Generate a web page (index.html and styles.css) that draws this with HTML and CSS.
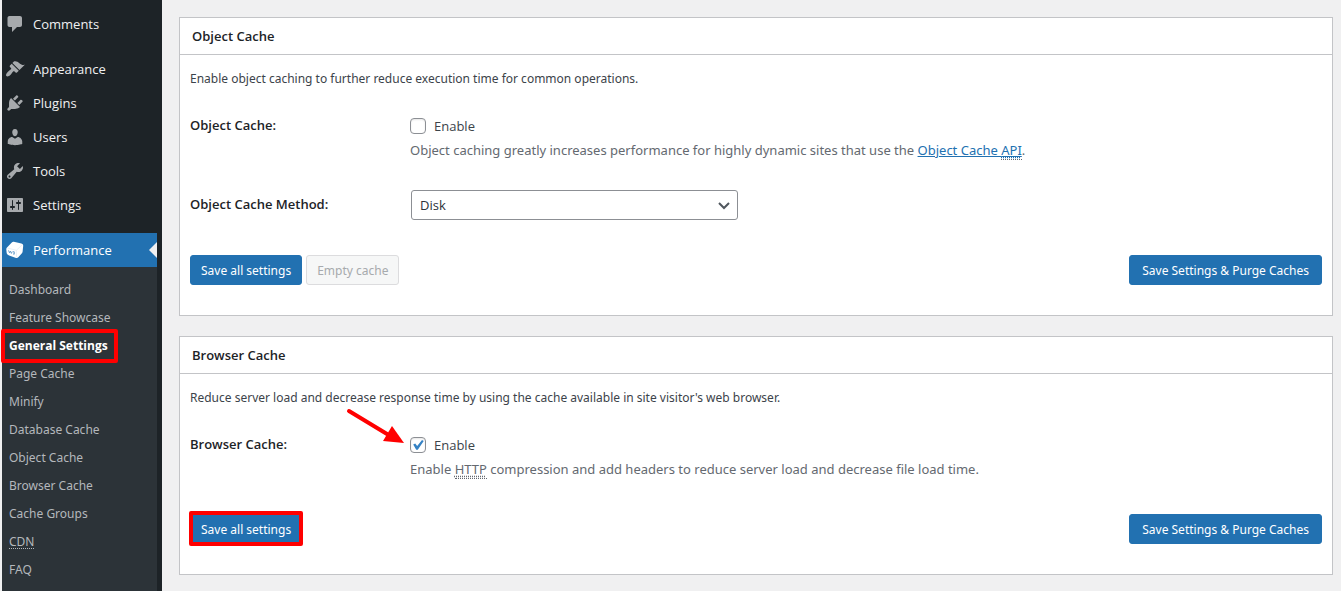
FILE: index.html
```html
<!DOCTYPE html>
<html lang="en">
<head>
<meta charset="utf-8">
<meta name="viewport" content="width=device-width, initial-scale=1">
<title>General Settings – Performance</title>
<link rel="stylesheet" href="styles.css">
</head>
<body>
<div class="admin">
  <nav class="sidebar" aria-label="Main menu">
    <ul class="menu">
      <li><a class="menu-link" href="#"><svg class="icon" viewBox="0 0 20 20"><path d="M4.500 2h10.500c1.100 0 2 .9 2 2v7c0 1.100-.9 2-2 2h-3l-5 5v-5H4.500c-1.100 0-2-.9-2-2V4c0-1.100.9-2 2-2z"/></svg>Comments</a></li>
      <li class="group-start"><a class="menu-link" href="#"><svg class="icon" viewBox="0 0 20 20"><path d="M14.48 11.06L7.41 3.99l1.5-1.5c.5-.56 2.3-.47 3.51.32 1.21.8 1.43 1.28 2.91 2.1 1.18.64 2.45 1.26 4.45.85zm-.71.71L6.7 4.7 4.93 6.47c-.39.39-.39 1.02 0 1.41l1.06 1.06c.39.39.39 1.03 0 1.42-.6.6-1.43 1.11-2.21 1.69-.35.26-.7.53-1.01.84C1.43 14.23.4 16.08 1.4 17.07c.99 1 2.84-.03 4.18-1.36.31-.31.58-.66.85-1.02.57-.78 1.08-1.61 1.69-2.21.39-.39 1.02-.39 1.41 0l1.06 1.06c.39.39 1.02.39 1.41 0z"/></svg>Appearance</a></li>
      <li><a class="menu-link" href="#"><svg class="icon" viewBox="0 0 20 20"><path d="M13.11 4.36L9.87 7.6 8 5.73l3.24-3.24c.35-.34 1.05-.2 1.56.32.52.51.66 1.21.31 1.55zm-8 1.77l.91-1.12 9.01 9.01-1.19.84c-.71.71-2.63 1.16-3.82 1.16H6.14L4.9 17.26c-.59.59-1.54.59-2.12 0-.59-.58-.59-1.53 0-2.12l1.24-1.24v-3.88c0-1.13.4-3.19 1.09-3.89zm7.26 3.97l3.24-3.24c.34-.35 1.04-.21 1.55.31.52.51.66 1.21.31 1.55l-3.24 3.25z"/></svg>Plugins</a></li>
      <li><a class="menu-link" href="#"><svg class="icon" viewBox="0 0 20 20"><path d="M10 9.25c-2.27 0-2.73-3.44-2.73-3.44C7 4.02 7.82 2 9.97 2c2.16 0 2.98 2.02 2.71 3.81 0 0-.41 3.44-2.68 3.44zm0 2.57L12.72 10c2.39 0 4.52 2.33 4.52 4.53v2.49s-3.65 1.13-7.24 1.13c-3.65 0-7.24-1.13-7.24-1.13v-2.49c0-2.25 1.94-4.48 4.47-4.48z"/></svg>Users</a></li>
      <li><a class="menu-link" href="#"><svg class="icon" viewBox="0 0 20 20"><path d="M16.68 9.77c-1.34 1.34-3.3 1.67-4.95.99l-5.41 6.52c-.99.99-2.59.99-3.58 0s-.99-2.59 0-3.57l6.52-5.42c-.68-1.65-.35-3.61.99-4.95 1.28-1.28 3.12-1.62 4.72-1.06l-2.89 2.89 2.82 2.82 2.86-2.87c.53 1.58.18 3.39-1.08 4.65zM3.81 16.21c.4.39 1.04.39 1.43 0 .4-.4.4-1.04 0-1.43-.39-.4-1.03-.4-1.43 0-.39.39-.39 1.03 0 1.43z"/></svg>Tools</a></li>
      <li><a class="menu-link" href="#"><svg class="icon" viewBox="0 0 20 20"><path d="M18 16V4c0-.55-.45-1-1-1H3c-.55 0-1 .45-1 1v12c0 .55.45 1 1 1h14c.55 0 1-.45 1-1zM8 11h1c.55 0 1 .45 1 1s-.45 1-1 1H8v1.5c0 .28-.22.5-.5.5s-.5-.22-.5-.5V13H6c-.55 0-1-.45-1-1s.45-1 1-1h1V5.5c0-.28.22-.5.5-.5s.5.22.5.5V11zm5-2h-1c-.55 0-1-.45-1-1s.45-1 1-1h1V5.5c0-.28.22-.5.5-.5s.5.22.5.5V7h1c.55 0 1 .45 1 1s-.45 1-1 1h-1v5.5c0 .28-.22.5-.5.5s-.5-.22-.5-.5V9z"/></svg>Settings</a></li>
      <li class="group-start"><a class="menu-link current" href="#"><svg class="icon" viewBox="0 0 20 20"><path d="M2 7.500L6.800 2.400q.8-.9 2-.7l7.600 1.800q1.900.5 1.800 2.300l-.6 5.900q-.1.9-.7 1.600l-3.600 4q-.9.900-2.200.6l-7-2.400Q2 14.800 1.700 13.200L1.300 9.500q-.1-1.200.7-2z"/><path class="cube-line" d="M2.300 8l9 2.300 6.300-5.800M11.300 10.300l.3 7"/><path class="cube-mark" d="M3.500 10.400l1 2.400.9-1.700 1 2.300.9-1.900M8 11.600l1.600.4-.9 1 .9 1-1.500.1"/></svg>Performance</a>
        <ul class="submenu">
          <li><a class="sub-link" href="#">Dashboard</a></li>
          <li><a class="sub-link" href="#">Feature Showcase</a></li>
          <li><a class="sub-link selected" href="#" aria-current="page">General Settings</a></li>
          <li><a class="sub-link" href="#">Page Cache</a></li>
          <li><a class="sub-link" href="#">Minify</a></li>
          <li><a class="sub-link" href="#">Database Cache</a></li>
          <li><a class="sub-link" href="#">Object Cache</a></li>
          <li><a class="sub-link" href="#">Browser Cache</a></li>
          <li><a class="sub-link" href="#">Cache Groups</a></li>
          <li><a class="sub-link" href="#"><abbr title="Content Delivery Network">CDN</abbr></a></li>
          <li><a class="sub-link" href="#">FAQ</a></li>
        </ul>
      </li>
    </ul>
  </nav>

  <main class="content">
    <section class="panel">
      <h2 class="panel-title">Object Cache</h2>
      <div class="panel-body">
        <p class="intro">Enable object caching to further reduce execution time for common operations.</p>
        <div class="fields">
          <div class="field">
            <span class="field-name">Object Cache:</span>
            <div class="field-value">
              <label class="check"><input class="box" type="checkbox">Enable</label>
              <p class="hint">Object caching greatly increases performance for highly dynamic sites that use the <a class="hint-link" href="#">Object Cache <abbr title="Application Programming Interface">API</abbr></a>.</p>
            </div>
          </div>
          <div class="field">
            <label class="field-name" for="method">Object Cache Method:</label>
            <div class="field-value">
              <div class="select-wrap">
                <select class="select" id="method"><option>Disk</option></select>
                <svg class="chevron" viewBox="0 0 12 8"><path d="M1 1l5 5 5-5"/></svg>
              </div>
            </div>
          </div>
        </div>
        <div class="actions">
          <button class="button primary" type="button">Save all settings</button>
          <button class="button" type="button" disabled>Empty cache</button>
          <button class="button primary last" type="button">Save Settings &amp; Purge Caches</button>
        </div>
      </div>
    </section>

    <section class="panel">
      <h2 class="panel-title">Browser Cache</h2>
      <div class="panel-body">
        <p class="intro">Reduce server load and decrease response time by using the cache available in site visitor's web browser.</p>
        <div class="fields">
          <div class="field">
            <span class="field-name">Browser Cache:</span>
            <div class="field-value">
              <label class="check"><input class="box" type="checkbox" checked>Enable</label>
              <svg class="arrow" viewBox="0 0 60 40"><path class="arrow-shaft" d="M5 5l38 23"/><path class="arrow-head" d="M48 20l12 17-21-2z"/></svg>
              <p class="hint">Enable <abbr title="HyperText Transfer Protocol">HTTP</abbr> compression and add headers to reduce server load and decrease file load time.</p>
            </div>
          </div>
        </div>
        <div class="actions">
          <button class="button primary marked" type="button">Save all settings</button>
          <button class="button primary last" type="button">Save Settings &amp; Purge Caches</button>
        </div>
      </div>
    </section>
  </main>
</div>
</body>
</html>
```
FILE: styles.css
```css
* { box-sizing: border-box; }

body {
  margin: 0;
  background: #f0f0f1;
  color: #3c434a;
  font-family: "Open Sans", "Noto Sans", sans-serif;
  font-size: 13px;
  line-height: 20px;
}

ul, p, h2 { margin: 0; padding: 0; }
ul { list-style: none; }
a { color: inherit; text-decoration: none; }
abbr { text-decoration: underline dotted; text-underline-offset: 2px; }

.admin {
  display: flex;
  min-height: 100vh;
  padding-left: 2px;
}

/* Sidebar */
.sidebar {
  flex: none;
  display: flex;
  width: 160px;
  padding-right: 5px;
  background: #1d2327;
}

.menu {
  display: flex;
  flex-direction: column;
  flex: 1;
  padding-top: 7px;
}

.menu > li:last-child {
  display: flex;
  flex-direction: column;
  flex: 1;
}

.group-start { margin-top: 11px; }

.menu-link {
  position: relative;
  display: flex;
  align-items: center;
  gap: 8px;
  height: 34px;
  padding-left: 3px;
  color: #f0f0f1;
}

.icon {
  flex: none;
  width: 20px;
  height: 20px;
  fill: #a7aaad;
}

.current { background: #2271b1; color: #fff; }
.current .icon { fill: #fff; }
.cube-line, .cube-mark { fill: none; stroke: #d3e3f0; stroke-width: 0.5; }
.cube-mark { stroke: #4a8bc0; stroke-width: 0.8; }

.current::after {
  content: "";
  position: absolute;
  top: 9px;
  right: 0;
  border: 8px solid transparent;
  border-left: 0;
  border-right-color: #f0f0f1;
}

.submenu {
  flex: 1;
  padding-top: 9px;
  background: #2c3338;
}

.sub-link {
  position: relative;
  display: block;
  padding-left: 7px;
  color: #b4b8bc;
  font-family: "Noto Sans", sans-serif;
  font-size: 12px;
  line-height: 28px;
}

.selected {
  color: #fff;
  font-family: "Open Sans", sans-serif;
  font-weight: 700;
}

.selected::after {
  content: "";
  position: absolute;
  inset: -3px 39px -3px -1px;
  border: 4px solid #f00;
  border-radius: 2px;
}

/* Panels */
.content {
  display: flex;
  flex-direction: column;
  flex: 1;
  gap: 20px;
  padding: 17px 8px 15px 17px;
}

.panel {
  border: 1px solid #c3c4c7;
  background: #fff;
}

.panel-title {
  padding: 8px 12px;
  border-bottom: 1px solid #c3c4c7;
  color: #1d2327;
  font-size: 13px;
  font-weight: 600;
  line-height: 20px;
}

.panel-body { padding: 14px 10px 30px; }

.intro { font-family: "Noto Sans", sans-serif; font-size: 12px; }

.fields {
  display: flex;
  flex-direction: column;
  gap: 34px;
  padding: 26px 0 35px;
}

.field { display: flex; align-items: flex-start; }

.field-name {
  flex: none;
  width: 220px;
  color: #1d2327;
  font-weight: 600;
}

.field-value { position: relative; flex: 1; }

.check {
  display: flex;
  align-items: center;
  gap: 8px;
  width: fit-content;
  line-height: 22px;
}

.box {
  appearance: none;
  width: 16px;
  height: 16px;
  margin: 0;
  border: 1px solid #8c8f94;
  border-radius: 4px;
  background: #fff;
  box-shadow: inset 0 1px 2px rgba(0, 0, 0, 0.1);
}

.box:checked {
  background: #fff url("data:image/svg+xml,%3Csvg xmlns='http://www.w3.org/2000/svg' viewBox='0 0 14 14'%3E%3Cpath d='M2.200 6.500L4.200 5.500 6.200 8 11 2 12.700 3 6.800 11.800 5.200 11.800z' fill='%233582c4'/%3E%3C/svg%3E") center / 14px no-repeat;
}

.hint {
  padding-top: 3px;
  color: #646970;
  font-family: "Noto Sans", sans-serif;
}

.hint abbr { border-bottom: 1px dotted #646970; }
.hint-link { color: #2271b1; text-decoration: underline; }

.select-wrap {
  position: relative;
  width: 327px;
  margin: -4px 1px 0;
}

.select {
  appearance: none;
  display: block;
  width: 100%;
  height: 30px;
  padding: 0 24px 0 8px;
  border: 1px solid #8c8f94;
  border-radius: 3px;
  background: #fff;
  color: #2c3338;
  font: inherit;
}

.chevron {
  position: absolute;
  top: 12px;
  right: 8px;
  width: 12px;
  height: 8px;
  fill: none;
  stroke: #50575e;
  stroke-width: 2;
  pointer-events: none;
}

.actions { display: flex; gap: 4px; }

.button {
  position: relative;
  height: 30px;
  padding: 0 10px;
  border: 1px solid #dcdcde;
  border-radius: 3px;
  background: #f6f7f7;
  color: #a7aaad;
  font-family: "Noto Sans", sans-serif;
  font-size: 12px;
  white-space: nowrap;
}

.primary { border-color: #2271b1; background: #2271b1; color: #fff; }
.last { margin-left: auto; padding: 0 12px; }

.marked::after {
  content: "";
  position: absolute;
  inset: -4px -2px -3px;
  border: 4px solid #f00;
  border-radius: 2px;
}

.arrow {
  position: absolute;
  top: -28px;
  left: -66px;
  width: 60px;
  height: 40px;
}

.arrow-shaft { stroke: #f00; stroke-width: 4; stroke-linecap: round; }
.arrow-head { fill: #f00; }
```
